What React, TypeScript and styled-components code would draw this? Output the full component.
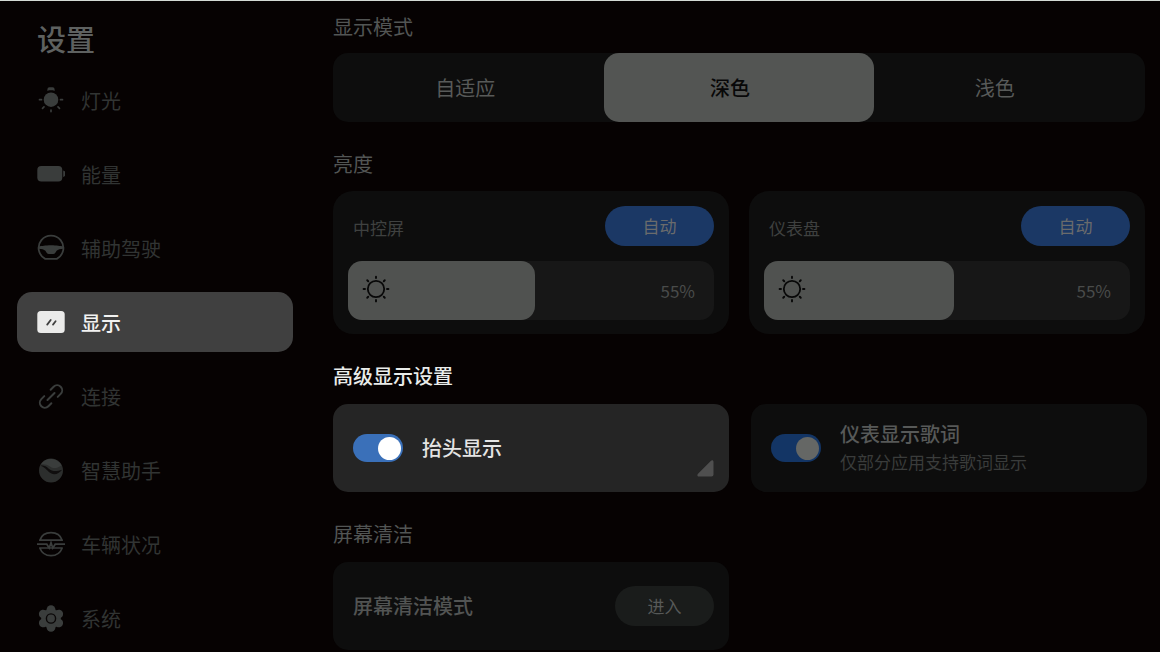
import React, { useState } from "react";
import styled, { createGlobalStyle } from "styled-components";

const GlobalStyle = createGlobalStyle`
  *, *::before, *::after { box-sizing: border-box; }
  body {
    margin: 0;
    background: #060202;
    font-family: "Noto Sans CJK SC", sans-serif;
  }
  button, input { font: inherit; color: inherit; margin: 0; }
`;

const Page = styled.div`
  display: flex;
  gap: 40px;
  min-height: 100vh;
  padding: 0 15px 0 17px;
  border-top: 1px solid #d3dad5;
  background: #060202;
`;

const Sidebar = styled.aside`
  flex: none;
  width: 276px;
  padding-top: 15px;
`;

const Title = styled.h1`
  margin: 0 0 10px;
  padding-left: 20px;
  font-size: 29px;
  line-height: 44px;
  font-weight: 500;
  color: #5e6160;
`;

const NavList = styled.nav`
  display: flex;
  flex-direction: column;
  gap: 14px;
`;

const NavItem = styled.button<{ $active: boolean }>`
  display: flex;
  align-items: center;
  gap: 16px;
  height: 60px;
  padding: 0 20px;
  border: 0;
  border-radius: 15px;
  background: ${(p) => (p.$active ? "#404040" : "transparent")};
  color: ${(p) => (p.$active ? "#ebebea" : "#3a3d3c")};
  cursor: pointer;

  svg { flex: none; }
`;

const NavLabel = styled.span<{ $active: boolean }>`
  padding-top: 2px;
  font-size: 20px;
  line-height: 28px;
  font-weight: ${(p) => (p.$active ? 500 : 400)};
  color: ${(p) => (p.$active ? "#f2f2f1" : "#313433")};
`;

const Main = styled.main`
  flex: 1;
  min-width: 0;
  display: flex;
  flex-direction: column;
  gap: 28px;
  padding-top: 12px;
`;

const Section = styled.section<{ $gap?: number }>`
  display: flex;
  flex-direction: column;
  gap: ${(p) => p.$gap ?? 14}px;
`;

const Heading = styled.h2<{ $bright?: boolean }>`
  margin: 0;
  font-size: 20px;
  line-height: 28px;
  font-weight: ${(p) => (p.$bright ? 500 : 400)};
  color: ${(p) => (p.$bright ? "#e9ecea" : "#525554")};
`;

const Segmented = styled.div`
  position: relative;
  display: grid;
  grid-template-columns: repeat(3, 1fr);
  height: 69px;
  padding-right: 18px;
  border-radius: 15px;
  background: #0d0d0d;
`;

const SegmentThumb = styled.span`
  position: absolute;
  top: 0;
  bottom: 0;
  width: calc(100% / 3);
  border-radius: 15px;
  background: #535553;
`;

const Segment = styled.button<{ $active: boolean }>`
  position: relative;
  border: 0;
  padding: 0;
  background: transparent;
  font-size: 20px;
  line-height: 28px;
  font-weight: ${(p) => (p.$active ? 500 : 400)};
  color: ${(p) => (p.$active ? "#080808" : "#585a59")};
  cursor: pointer;
`;

const CardGrid = styled.div<{ $wide?: boolean }>`
  display: grid;
  grid-template-columns: 1fr 1fr;
  gap: ${(p) => (p.$wide ? 22 : 20)}px;
  margin-right: ${(p) => (p.$wide ? -2 : 0)}px;
`;

const BrightnessCard = styled.div`
  display: flex;
  flex-direction: column;
  gap: 15px;
  padding: 15px 15px 14px;
  border-radius: 20px;
  background: #0d0d0d;
`;

const BrightnessHeader = styled.div`
  display: flex;
  align-items: center;
  justify-content: space-between;
`;

const BrightnessLabel = styled.label`
  padding: 4px 0 0 5px;
  font-size: 17px;
  line-height: 24px;
  color: #3f4140;
`;

const PillButton = styled.button<{ $primary?: boolean }>`
  width: ${(p) => (p.$primary ? 109 : 99)}px;
  height: 40px;
  padding: 0;
  border: 0;
  border-radius: 20px;
  background: ${(p) => (p.$primary ? "#1b3865" : "#1a1c1b")};
  font-size: 17px;
  line-height: 24px;
  color: ${(p) => (p.$primary ? "#6a6b6c" : "#575958")};
  cursor: pointer;
`;

const Slider = styled.div`
  position: relative;
  display: flex;
  align-items: center;
  justify-content: space-between;
  height: 59px;
  border-radius: 14px;
  background: #171717;
`;

const SliderFill = styled.div`
  display: flex;
  align-items: center;
  height: 100%;
  padding: 0 0 4px 14px;
  border-radius: 14px;
  background: #505250;
  color: #080808;
`;

const SliderValue = styled.output`
  padding-right: 19px;
  font-size: 17px;
  line-height: 24px;
  color: #494b4a;
`;

const SliderInput = styled.input`
  position: absolute;
  inset: 0;
  width: 100%;
  height: 100%;
  opacity: 0;
  cursor: pointer;
`;

const OptionCard = styled.div<{ $bright?: boolean }>`
  position: relative;
  display: flex;
  align-items: center;
  gap: 19px;
  min-height: 88px;
  padding: 0 15px 0 20px;
  border-radius: 15px;
  background: ${(p) => (p.$bright ? "#252525" : "#0d0d0d")};
`;

const Toggle = styled.input<{ $bright?: boolean }>`
  appearance: none;
  flex: none;
  display: flex;
  align-items: center;
  justify-content: flex-start;
  width: 50px;
  height: 28px;
  padding: 0 2px;
  border-radius: 14px;
  background: #2a2a2a;
  cursor: pointer;

  &::before {
    content: "";
    width: 23px;
    height: 23px;
    border-radius: 50%;
    background: ${(p) => (p.$bright ? "#ffffff" : "#656765")};
  }
  &:checked {
    justify-content: flex-end;
    background: ${(p) => (p.$bright ? "#3a70b9" : "#133565")};
  }
`;

const OptionLabel = styled.label<{ $bright?: boolean }>`
  display: flex;
  flex-direction: column;
  font-size: 20px;
  line-height: 28px;
  font-weight: 500;
  color: ${(p) => (p.$bright ? "#e4e4e4" : "#575958")};
`;

const OptionHint = styled.small`
  font-size: 17px;
  line-height: 28px;
  font-weight: 400;
  color: #3a3c3b;
`;

const CornerMark = styled.svg`
  position: absolute;
  right: 15px;
  bottom: 15px;
`;

const ActionLabel = styled.span`
  flex: 1;
  font-size: 20px;
  line-height: 28px;
  font-weight: 500;
  color: #525453;
`;

const Icon = ({ children }: { children: React.ReactNode }) => (
  <svg width="28" height="28" viewBox="0 0 28 28" fill="none" aria-hidden="true">
    {children}
  </svg>
);

const BulbIcon = () => (
  <Icon>
    <circle cx="14" cy="13.7" r="7.3" fill="currentColor" />
    <path d="M10.4 5V3.200a2 2 0 0 1 2-2h3.200a2 2 0 0 1 2 2V5l-1.600-.7h-4z" fill="currentColor" />
    <path
      d="M2.500 13.700h2M23.500 13.700h2M14 24v1.600M5.500 22.400l1.500-1.500M22.500 22.400l-1.500-1.500"
      stroke="currentColor"
      strokeWidth="1.700"
      strokeLinecap="round"
    />
  </Icon>
);

const BatteryIcon = () => (
  <Icon>
    <rect x=".3" y="6" width="25" height="15.400" rx="4" fill="currentColor" />
    <path d="M26.200 10.400c1.600.3 2.200 1.400 2.200 3.300s-.6 3-2.200 3.300z" fill="currentColor" />
  </Icon>
);

const WheelIcon = () => (
  <Icon>
    <path
      d="M8.200 24.900A12.400 12.400 0 1 1 19.800 24.900z"
      stroke="currentColor"
      strokeWidth="1.800"
      strokeLinejoin="round"
    />
    <path
      d="M1.600 12.300C5 12.300 8 11.300 14 11.300s9 1 12.400 1v2.500c-3 .1-5.400.7-6.800 2l-1.400 2.200c-.5.700-1.100 1-2 1h-4.400c-.9 0-1.500-.3-2-1l-1.400-2.200c-1.400-1.300-3.800-1.900-6.800-2z"
      fill="currentColor"
    />
  </Icon>
);

const DisplayIcon = () => (
  <Icon>
    <rect x=".3" y="3" width="27.400" height="22" rx="3.500" fill="currentColor" />
    <path
      d="M10.200 16.600l3.500-4.600M16 16.600l2.600-3.300"
      stroke="#404040"
      strokeWidth="1.800"
      strokeLinecap="round"
    />
  </Icon>
);

const LinkIcon = () => (
  <Icon>
    <g transform="rotate(-45 14 14.500)" stroke="currentColor" strokeWidth="2" strokeLinecap="round">
      <path d="M9.500 9.500H5.300a5 5 0 0 0 0 10H9.500" />
      <path d="M18.500 9.500H22.700a5 5 0 0 1 0 10H18.500" />
      <path d="M9 14.500h10" />
    </g>
  </Icon>
);

const AssistantIcon = () => (
  <Icon>
    <circle cx="14" cy="14.500" r="12" fill="currentColor" fillOpacity=".75" />
    <path d="M4.200 8.300C8 1.500 20 .8 24.600 9.500c-4.600 2.800-8.200 3.600-11.600 1.100-3-2.200-5.800-2.700-8.800-2.300z" fill="currentColor" />
    <path
      d="M3.600 9.700c3.200-.6 5.400.4 8.200 3 3.400 3 7.600 3 13.400 1.100-3 3.700-7.200 5.600-10.800 3.800-3.600-1.900-5.600-6-10.800-7.900z"
      fill="#100e0e"
    />
  </Icon>
);

const VehicleIcon = () => (
  <Icon>
    <path
      d="M2.800 10.200h22.400C23.600 5.400 19.200 2.600 14 2.600S4.400 5.400 2.800 10.200zM2.800 18h22.400c-1.800 4.700-6.200 7.700-11.200 7.700S4.600 22.700 2.800 18z"
      stroke="currentColor"
      strokeWidth="1.700"
      strokeLinejoin="round"
    />
    <path d="M0 14.200h9.800l2.400 3.800L14 12.600l1.800 5.400 2.400-3.800H28" stroke="currentColor" strokeWidth="1.700" />
  </Icon>
);

const GearIcon = () => (
  <Icon>
    <g fill="currentColor">
      <circle cx="14" cy="14.500" r="9.800" />
      {[0, 60, 120, 180, 240, 300].map((angle) => (
        <circle key={angle} cx="14" cy="5.600" r="4.400" transform={`rotate(${angle} 14 14.500)`} />
      ))}
    </g>
    <circle cx="14" cy="14.500" r="4.600" stroke="#0a0707" strokeWidth="1.400" />
  </Icon>
);

const SunIcon = () => (
  <svg width="28" height="28" viewBox="0 0 28 28" fill="none" aria-hidden="true">
    <circle cx="14" cy="14" r="8.200" stroke="currentColor" strokeWidth="1.800" />
    {[0, 45, 90, 135, 180, 225, 270, 315].map((angle) => (
      <path
        key={angle}
        d="M14 1.600v1.400"
        stroke="currentColor"
        strokeWidth="1.900"
        strokeLinecap="round"
        transform={`rotate(${angle} 14 14)`}
      />
    ))}
  </svg>
);

const navItems = [
  { label: "灯光", icon: BulbIcon },
  { label: "能量", icon: BatteryIcon },
  { label: "辅助驾驶", icon: WheelIcon },
  { label: "显示", icon: DisplayIcon },
  { label: "连接", icon: LinkIcon },
  { label: "智慧助手", icon: AssistantIcon },
  { label: "车辆状况", icon: VehicleIcon },
  { label: "系统", icon: GearIcon },
];

const modes = ["自适应", "深色", "浅色"];

type BrightnessProps = { id: string; label: string; offset: number };

// Each screen's panel reads a few percent above the width of its filled bar.
const Brightness = ({ id, label, offset }: BrightnessProps) => {
  const [value, setValue] = useState(55);
  return (
    <BrightnessCard>
      <BrightnessHeader>
        <BrightnessLabel htmlFor={id}>{label}</BrightnessLabel>
        <PillButton type="button" $primary>自动</PillButton>
      </BrightnessHeader>
      <Slider>
        <SliderFill style={{ width: `${Math.max(14, value - offset)}%` }}>
          <SunIcon />
        </SliderFill>
        <SliderValue htmlFor={id}>{value}%</SliderValue>
        <SliderInput
          id={id}
          type="range"
          min={0}
          max={100}
          value={value}
          onChange={(e) => setValue(Number(e.target.value))}
        />
      </Slider>
    </BrightnessCard>
  );
};

export default function App() {
  const [section, setSection] = useState("显示");
  const [mode, setMode] = useState(1);

  return (
    <>
      <GlobalStyle />
      <Page>
        <Sidebar>
          <Title>设置</Title>
          <NavList>
            {navItems.map(({ label, icon: ItemIcon }) => (
              <NavItem
                key={label}
                type="button"
                $active={label === section}
                aria-current={label === section ? "page" : undefined}
                onClick={() => setSection(label)}
              >
                <ItemIcon />
                <NavLabel $active={label === section}>{label}</NavLabel>
              </NavItem>
            ))}
          </NavList>
        </Sidebar>

        <Main>
          <Section $gap={12}>
            <Heading>显示模式</Heading>
            <Segmented>
              <SegmentThumb style={{ left: `${(mode * 100) / 3}%` }} />
              {modes.map((name, i) => (
                <Segment
                  key={name}
                  type="button"
                  $active={i === mode}
                  aria-pressed={i === mode}
                  onClick={() => setMode(i)}
                >
                  {name}
                </Segment>
              ))}
            </Segmented>
          </Section>

          <Section $gap={13}>
            <Heading>亮度</Heading>
            <CardGrid>
              <Brightness id="center-screen" label="中控屏" offset={4} />
              <Brightness id="dashboard" label="仪表盘" offset={3} />
            </CardGrid>
          </Section>

          <Section>
            <Heading $bright>高级显示设置</Heading>
            <CardGrid $wide>
              <OptionCard $bright>
                <Toggle id="hud" type="checkbox" defaultChecked $bright />
                <OptionLabel htmlFor="hud" $bright>抬头显示</OptionLabel>
                <CornerMark width="17" height="17" viewBox="0 0 17 17" aria-hidden="true">
                  <path d="M14 .8 1 13.800c-1.200 1.200-.6 2.700 1 2.700h12.500a2 2 0 0 0 2-2V2c0-1.700-1.300-2.400-2.500-1.200z" fill="#4f4f4f" />
                </CornerMark>
              </OptionCard>
              <OptionCard>
                <Toggle id="lyrics" type="checkbox" defaultChecked />
                <OptionLabel htmlFor="lyrics">
                  仪表显示歌词
                  <OptionHint>仅部分应用支持歌词显示</OptionHint>
                </OptionLabel>
              </OptionCard>
            </CardGrid>
          </Section>

          <Section>
            <Heading>屏幕清洁</Heading>
            <CardGrid>
              <OptionCard>
                <ActionLabel>屏幕清洁模式</ActionLabel>
                <PillButton type="button">进入</PillButton>
              </OptionCard>
            </CardGrid>
          </Section>
        </Main>
      </Page>
    </>
  );
}
